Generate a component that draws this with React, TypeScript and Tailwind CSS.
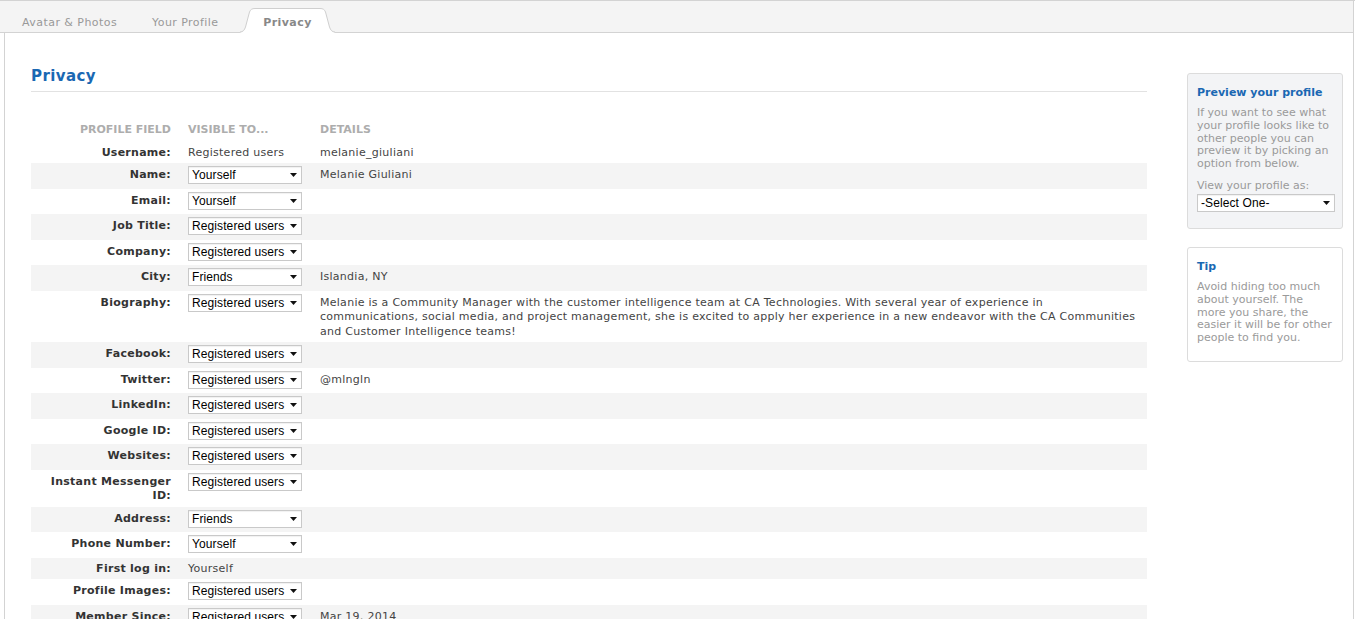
import React from "react";

/**
 * App.tsx
 *
 * Halaman pengaturan privasi profil: tab di atas, tabel field profil
 * beserta siapa yang boleh melihat, dan dua kotak di sidebar kanan.
 */

type Row = {
  label: React.ReactNode;
  visible: string;
  select: boolean;
  details?: React.ReactNode;
};

const rows: Row[] = [
  { label: "Username:", visible: "Registered users", select: false, details: "melanie_giuliani" },
  { label: "Name:", visible: "Yourself", select: true, details: "Melanie Giuliani" },
  { label: "Email:", visible: "Yourself", select: true },
  { label: "Job Title:", visible: "Registered users", select: true },
  { label: "Company:", visible: "Registered users", select: true },
  { label: "City:", visible: "Friends", select: true, details: "Islandia, NY" },
  {
    label: "Biography:",
    visible: "Registered users",
    select: true,
    details: (
      <>
        Melanie is a Community Manager with the customer intelligence team at CA Technologies. With several year of experience in
        <br />
        communications, social media, and project management, she is excited to apply her experience in a new endeavor with the CA Communities
        <br />
        and Customer Intelligence teams!
      </>
    ),
  },
  { label: "Facebook:", visible: "Registered users", select: true },
  { label: "Twitter:", visible: "Registered users", select: true, details: "@mlngln" },
  { label: "LinkedIn:", visible: "Registered users", select: true },
  { label: "Google ID:", visible: "Registered users", select: true },
  { label: "Websites:", visible: "Registered users", select: true },
  {
    label: (
      <>
        Instant Messenger
        <br />
        ID:
      </>
    ),
    visible: "Registered users",
    select: true,
  },
  { label: "Address:", visible: "Friends", select: true },
  { label: "Phone Number:", visible: "Yourself", select: true },
  { label: "First log in:", visible: "Yourself", select: false },
  { label: "Profile Images:", visible: "Registered users", select: true },
  { label: "Member Since:", visible: "Registered users", select: true, details: "Mar 19, 2014" },
];

function Caret() {
  return (
    <svg width="7" height="4" viewBox="0 0 7 4" aria-hidden="true">
      <path d="M0 0h7L3.5 4z" fill="#111" />
    </svg>
  );
}

function FakeSelect({ value, className }: { value: string; className?: string }) {
  return (
    <div
      className={
        "flex h-[18px] items-center justify-between border border-[#c9c9c9] bg-white pl-[3px] pr-[4px] font-['Liberation_Sans',Arial,sans-serif] text-[12px] leading-none tracking-[0.1px] text-black shadow-[inset_0_1px_1px_rgba(0,0,0,0.06)] " +
        (className ?? "")
      }
    >
      <span>{value}</span>
      <Caret />
    </div>
  );
}

function PrivacyTab() {
  return (
    <div className="relative -mb-px h-[25px] w-[95px]">
      <svg className="absolute inset-0" width="95" height="25" viewBox="0 0 95 25" aria-hidden="true">
        <path
          d="M0.5 24 C3 24 4.5 22 5.5 19 L9.5 4 C10.5 1.5 12 0.5 15 0.5 L80 0.5 C83 0.5 84.5 1.5 85.5 4 L89.5 19 C90.5 22 92 24 94.5 24 L94.5 25 L0.5 25 Z"
          fill="#fff"
        />
        <path
          d="M0 24 C3 24 4.5 22 5.5 19 L9.5 4 C10.5 1.5 12 0.5 15 0.5 L80 0.5 C83 0.5 84.5 1.5 85.5 4 L89.5 19 C90.5 22 92 24 95 24"
          fill="none"
          stroke="#cfcfcf"
        />
      </svg>
      <div className="relative pt-[8px] text-center text-[11px] font-bold leading-[13px] tracking-[0.45px] text-[#888]">
        Privacy
      </div>
    </div>
  );
}

export default function App() {
  return (
    <div className="h-[619px] w-[1355px] overflow-hidden border-t border-[#d3d3d3] bg-white font-['DejaVu_Sans',Verdana,sans-serif] text-[11px] text-[#333]">
      {/* tab bar */}
      <div className="mr-[1px] flex h-[32px] items-end border-r border-b border-[#d3d3d3] bg-[#f4f4f4] pl-[22px]">
        <div className="h-[24px] w-[130px] pt-[8px] leading-[13px] tracking-[0.45px] text-[#999]">Avatar &amp; Photos</div>
        <div className="h-[24px] w-[88px] pt-[8px] leading-[13px] tracking-[0.45px] text-[#999]">Your Profile</div>
        <PrivacyTab />
      </div>

      <div className="ml-[4px] mr-[1px] flex h-[600px] border-r border-l border-[#d3d3d3] pt-[33px] pl-[26px] pr-[10px]">
        {/* main */}
        <div className="w-[1116px]">
          <h1 className="border-b border-[#e2e2e2] pt-[1px] pb-[6px] text-[15px] font-bold leading-[18px] tracking-[0.4px] text-[#1a68b3]">
            Privacy
          </h1>

          <table className="mt-[27px] w-full border-collapse text-[11px] tracking-[0.27px]">
            <thead>
              <tr>
                <th className="w-[149px] pt-[4px] pr-[9px] pb-[4px] text-right align-top font-bold uppercase leading-[14.5px] tracking-normal text-[#adadad]">
                  Profile Field
                </th>
                <th className="w-[132px] pt-[4px] pl-[8px] pb-[4px] text-left align-top font-bold uppercase leading-[14.5px] tracking-normal text-[#adadad]">
                  Visible To...
                </th>
                <th className="pt-[4px] pl-[8px] pb-[4px] text-left align-top font-bold uppercase leading-[14.5px] tracking-normal text-[#adadad]">
                  Details
                </th>
              </tr>
            </thead>
            <tbody>
              {rows.map((row, i) => {
                const textPad = row.select ? "pt-[5px]" : "pt-[4px]";
                return (
                  <tr key={i} className={i % 2 === 1 ? "bg-[#f4f4f4]" : ""}>
                    <td className={`${textPad} pr-[9px] pb-[3px] text-right align-top font-bold leading-[14.5px] text-[#333]`}>
                      {row.label}
                    </td>
                    <td className="pt-[4px] pl-[8px] pb-[3px] align-top leading-[14.5px]">
                      {row.select ? (
                        <FakeSelect value={row.visible} className="-mt-px mb-[1.5px] w-[114px]" />
                      ) : (
                        <span className="text-[#444]">{row.visible}</span>
                      )}
                    </td>
                    <td className={`${textPad} pl-[8px] pb-[3px] align-top leading-[14.5px] text-[#444]`}>{row.details}</td>
                  </tr>
                );
              })}
            </tbody>
          </table>
        </div>

        {/* sidebar */}
        <div className="ml-[40px] w-[156px] pt-[7px]">
          <div className="rounded-[3px] border border-[#dcdcdc] bg-[#f3f4f6] px-[9px] pt-[12px] pb-[16px]">
            <h2 className="text-[11px] font-bold leading-[14px] text-[#1a68b3]">Preview your profile</h2>
            <p className="mt-[7px] leading-[12.8px] text-[#9a9a9a]">
              If you want to see what your profile looks like to other people you can preview it by picking an option from below.
            </p>
            <p className="mt-[8px] leading-[13px] text-[#9a9a9a]">View your profile as:</p>
            <FakeSelect value="-Select One-" className="mt-[2px] w-[138px]" />
          </div>

          <div className="mt-[18px] rounded-[3px] border border-[#dcdcdc] bg-white px-[9px] pt-[12px] pb-[16px]">
            <h2 className="text-[11px] font-bold leading-[14px] text-[#1a68b3]">Tip</h2>
            <p className="mt-[7px] leading-[12.8px] text-[#9a9a9a]">
              Avoid hiding too much about yourself. The more you share, the easier it will be for other people to find you.
            </p>
          </div>
        </div>
      </div>
    </div>
  );
}
